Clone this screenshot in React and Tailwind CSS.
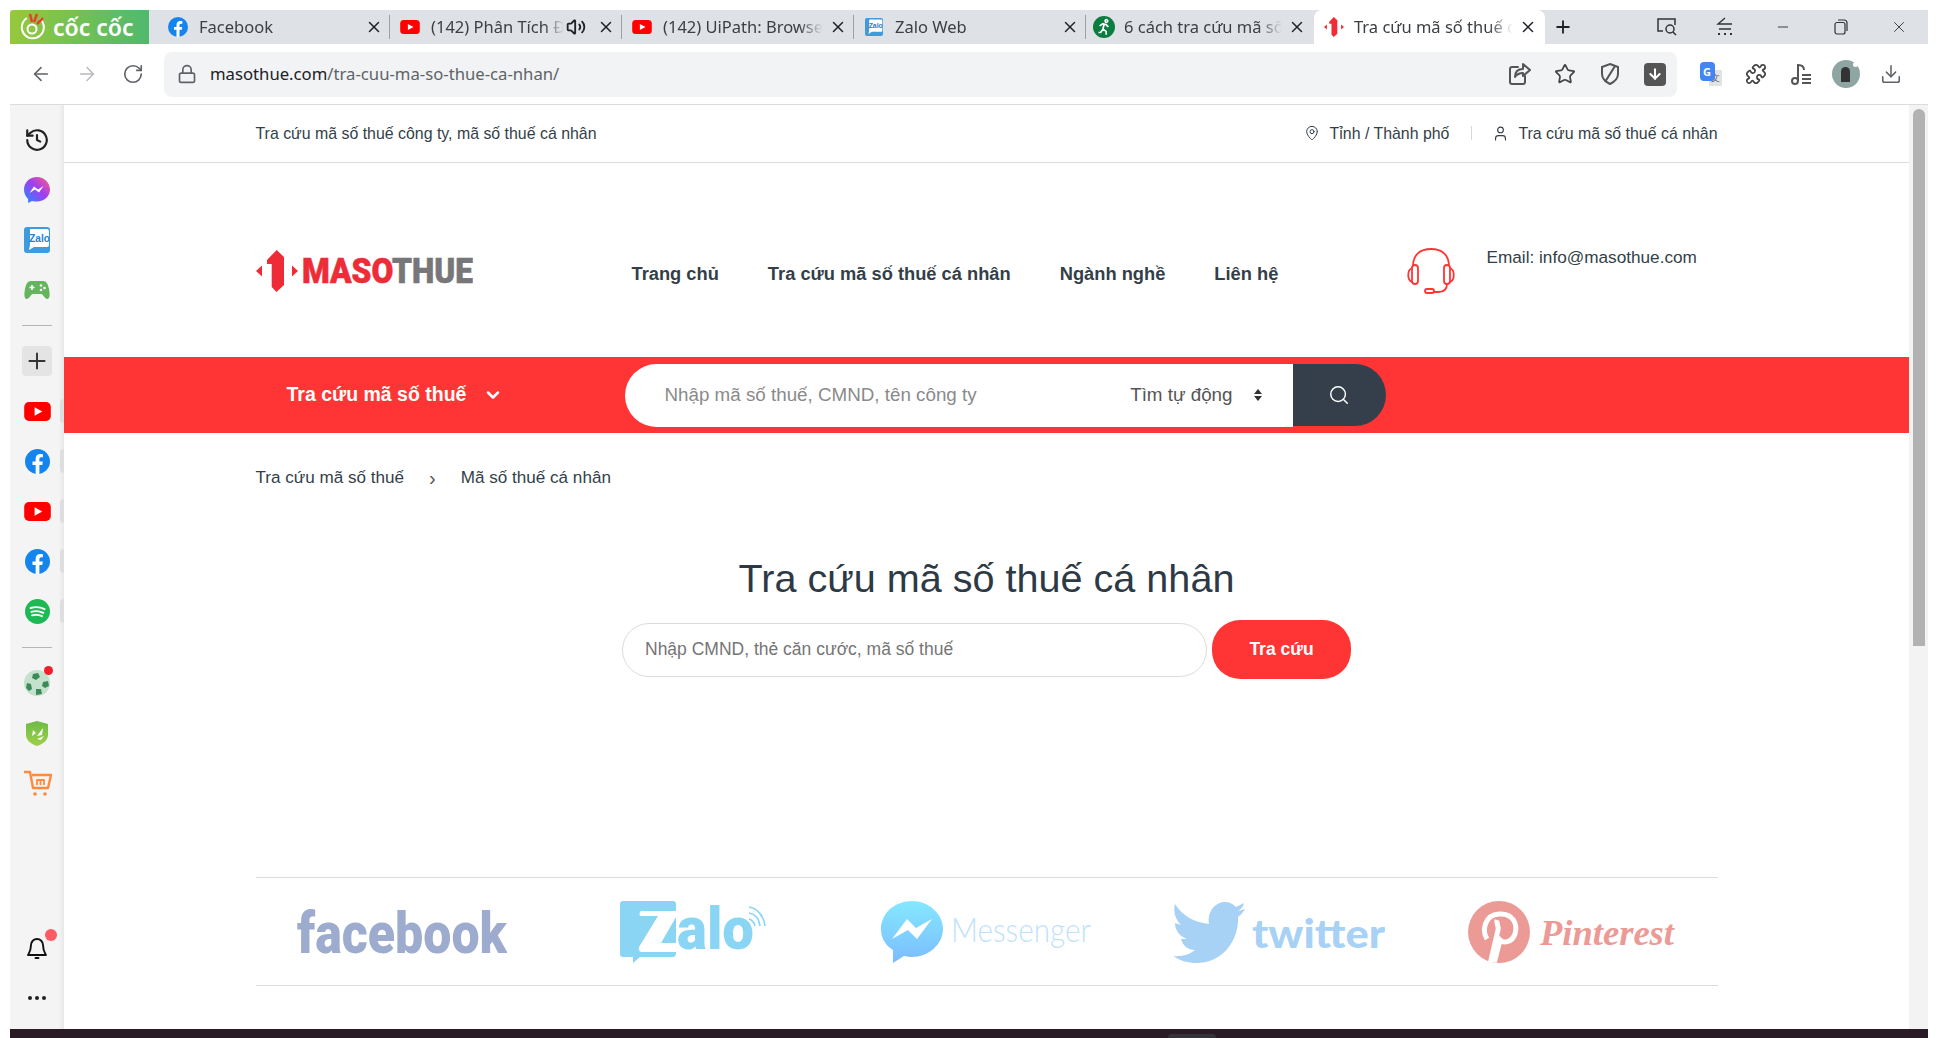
import React from 'react';
import { ArrowLeft, ArrowRight, RotateCw, Lock, Star, Puzzle, Download, X, Plus, Minus, Volume2, MapPin, User, Search, ChevronDown } from 'lucide-react';

function FbIcon({ size = 20 }) {
  return (
    <svg width={size} height={size} viewBox="0 0 24 24" className="shrink-0">
      <circle cx="12" cy="12" r="12" fill="#1485ee" />
      <path d="M16.6 15.4l.5-3.4h-3.3V9.8c0-.9.5-1.8 1.9-1.8h1.5V5.1s-1.3-.2-2.6-.2c-2.7 0-4.4 1.6-4.4 4.6V12H7.2v3.4h3V24h3.6v-8.6z" fill="#fff" />
    </svg>
  );
}

function YtIcon({ w = 20, h = 14 }) {
  return (
    <svg width={w} height={h} viewBox="0 0 28 20" className="shrink-0">
      <rect width="28" height="20" rx="5" fill="#f00" />
      <path d="M11 5.6L19 10l-8 4.4z" fill="#fff" />
    </svg>
  );
}

function ZaloIcon({ size = 26 }) {
  return (
    <svg width={size} height={size} viewBox="0 0 26 26" className="shrink-0">
      <rect width="26" height="26" rx="3" fill="#3d9be0" />
      <path d="M7 2h16c1 0 2 1 2 2v14c0 1-1 2-2 2H10l-5 3 1-5V3c0-.5.5-1 1-1z" fill="#fff" />
      <text x="15.500" y="14.500" textAnchor="middle" fontSize="10" fontWeight="700" fill="#2a80cc" fontFamily="Liberation Sans, sans-serif">Zalo</text>
    </svg>
  );
}

function MasoMark({ h = 20 }) {
  return (
    <svg height={h} viewBox="0 0 43 42" className="shrink-0">
      <path d="M0 21l6-5.500v11z" fill="#ee2c37" />
      <path d="M36 15.500l6 5.500-6 5.500z" fill="#ee2c37" />
      <path d="M20.700 0L28 7v28l-7.500 7-4.800-5V14H11v-4z" fill="#ee2c37" />
    </svg>
  );
}

function Tab({ icon, title, speaker, active, tight }) {
  const width = active ? 'w-[231px] bg-white rounded-t-lg' : tight ? 'w-[228px]' : 'w-[232px]';
  return (
    <div className={`relative flex items-center h-full shrink-0 ${tight ? 'pl-[8px]' : 'pl-[10px]'} ${width}`}>
      <div className="w-[20px] h-[20px] flex items-center justify-center shrink-0">{icon}</div>
      <div className={`${active || tight ? 'ml-[10px]' : 'ml-[11px]'} flex-1 min-w-0 overflow-hidden whitespace-nowrap text-[16.500px] text-[#3c4043] [mask-image:linear-gradient(90deg,#000_85%,transparent)]`}>{title}</div>
      {speaker && <Volume2 size={20} strokeWidth={2.2} className="ml-[2px] shrink-0 text-[#202124]" />}
      <X size={18} strokeWidth={2} className={`shrink-0 text-[#202124] ${speaker ? 'ml-[11px]' : 'ml-[6px]'} ${active || tight ? 'mr-[8px]' : 'mr-[6px]'}`} />
      {!active && !tight && <div className="w-px h-[24px] bg-[#9aa0a6] shrink-0" />}
    </div>
  );
}

function ToolBtn({ w = 'w-[45px]', children }) {
  return <div className={`${w} h-full flex items-center justify-center shrink-0 text-[#5f6368]`}>{children}</div>;
}

function SideItem({ marker, children }) {
  return (
    <div className="relative h-[50px] w-full flex items-center justify-center">
      {children}
      {marker && <div className="absolute right-0 top-[13px] w-[4px] h-[24px] rounded-l bg-[#dedede]" />}
    </div>
  );
}

function Sidebar() {
  return (
    <div className="w-[54px] shrink-0 flex flex-col pt-[10px] pb-[6px] bg-[linear-gradient(90deg,#f4f4f4_90%,#e8e8e8)]">
      <SideItem>
        <svg width="26" height="26" viewBox="0 0 24 24" fill="none" stroke="#222" strokeWidth="2" strokeLinecap="round" strokeLinejoin="round">
          <path d="M3 12a9 9 0 1 0 3-6.700L3 8" />
          <path d="M3 3v5h5" />
          <path d="M12 7.500V12l3 1.500" />
        </svg>
      </SideItem>
      <SideItem>
        <svg width="26" height="26" viewBox="0 0 26 26">
          <defs>
            <linearGradient id="msg" x1="0" y1="1" x2="1" y2="0">
              <stop offset="0" stopColor="#1f8cff" />
              <stop offset="0.55" stopColor="#a33df0" />
              <stop offset="1" stopColor="#ff5f7a" />
            </linearGradient>
          </defs>
          <path d="M13 0C5.700 0 0 5.400 0 12.600c0 3.800 1.600 7 4.100 9.300V26l3.900-2.100c1.600.5 3.200.7 5 .7 7.300 0 13-5.400 13-12S20.300 0 13 0z" fill="url(#msg)" />
          <path d="M5.500 16l4.500-6.500 4 3 5.500-3.500-4.500 6.500-4-3z" fill="#fff" />
        </svg>
      </SideItem>
      <SideItem><ZaloIcon size={26} /></SideItem>
      <SideItem>
        <svg width="26" height="20" viewBox="0 0 26 20">
          <path d="M7 1h12c3.500 0 5 3 6 8 .8 4.500 1.200 9-1.200 10-2 .7-4-3-6-5H8.200c-2 2-4 5.700-6 5C-.2 18 .2 13.500 1 9c1-5 2.500-8 6-8z" fill="#64b55e" />
          <path d="M5.500 7.500h5M8 5v5" stroke="#fff" strokeWidth="1.600" />
          <circle cx="17" cy="5.500" r="1.300" fill="#fff" />
          <circle cx="20.500" cy="8" r="1.300" fill="#fff" />
          <circle cx="17" cy="10" r="1.300" fill="#fff" />
        </svg>
      </SideItem>
      <div className="mt-[10px] mx-[12px] h-px bg-[#b5b5b5]" />
      <div className="mt-[10px] h-[50px] flex items-center justify-center">
        <div className="w-[30px] h-[30px] rounded bg-[#e4e4e4] flex items-center justify-center">
          <Plus size={26} strokeWidth={1.800} className="text-[#333]" />
        </div>
      </div>
      <SideItem marker><YtIcon w={27} h={19} /></SideItem>
      <SideItem marker><FbIcon size={25} /></SideItem>
      <SideItem marker><YtIcon w={27} h={19} /></SideItem>
      <SideItem marker><FbIcon size={25} /></SideItem>
      <SideItem marker>
        <svg width="25" height="25" viewBox="0 0 25 25">
          <circle cx="12.500" cy="12.500" r="12.500" fill="#1db954" />
          <path d="M5.500 9c4.500-1.300 10-1 14 1.200M6.300 12.800c4-1.100 8.500-.8 12 1.100M7 16.300c3.300-.9 7-.6 10 .9" fill="none" stroke="#fff" strokeWidth="1.900" strokeLinecap="round" />
        </svg>
      </SideItem>
      <div className="mt-[11px] mx-[12px] h-px bg-[#b5b5b5]" />
      <div className="h-[10px]" />
      <SideItem>
        <div className="relative">
          <svg width="26" height="26" viewBox="0 0 26 26">
            <circle cx="13" cy="13" r="13" fill="#c4e2cb" />
            <path d="M9 4l5-1 2 4-4 3-4-2zM19 12l5-1 1 5-4 2-3-2zM3 13l4 1 1 5-3 2-3-3zM12 19l5 0 1 5-6 1z" fill="#3c8a58" />
          </svg>
          <div className="absolute -top-[4px] -right-[3px] w-[9px] h-[9px] rounded-full bg-[#f01f2c]" />
        </div>
      </SideItem>
      <SideItem>
        <svg width="22" height="25" viewBox="0 0 22 25">
          <defs>
            <linearGradient id="shd" x1="0" y1="0" x2="0" y2="1">
              <stop offset="0" stopColor="#6dbb45" />
              <stop offset="1" stopColor="#9ed04a" />
            </linearGradient>
          </defs>
          <path d="M11 0l11 3v11c0 5-5 9-11 11C5 23 0 19 0 14V3z" fill="url(#shd)" />
          <path d="M6 15l1-6 3 3zM11 15l6-8-1 7zM11 18l7-3-3 4z" fill="#fff" />
        </svg>
      </SideItem>
      <SideItem>
        <svg width="29" height="27" viewBox="0 0 29 27" fill="none" stroke="#ff8a3d" strokeWidth="2.400" strokeLinejoin="round">
          <path d="M1 2h6l3 16h15l3-13H9" />
          <path d="M14 15v-5h3.500v5M17.500 10H21v5" strokeWidth="1.800" />
          <circle cx="12" cy="24" r="1.800" fill="#ff8a3d" stroke="none" />
          <circle cx="22" cy="24" r="1.800" fill="#ff8a3d" stroke="none" />
        </svg>
      </SideItem>
      <div className="relative mt-auto h-[50px] flex items-center justify-center">
        <svg width="24" height="24" viewBox="0 0 24 24" fill="none" stroke="#111" strokeWidth="1.900" strokeLinecap="round" strokeLinejoin="round">
          <path d="M6 9a6 6 0 0 1 12 0c0 6 2.500 9 3 10H3c.5-1 3-4 3-10z" />
          <path d="M10.500 22h3" />
        </svg>
        <div className="absolute top-[6px] right-[7px] w-[12px] h-[12px] rounded-full bg-[#ff5a63]" />
      </div>
      <div className="h-[50px] flex items-center justify-center gap-[3px]">
        <span className="w-[4px] h-[4px] rounded-full bg-[#222]" />
        <span className="w-[4px] h-[4px] rounded-full bg-[#222]" />
        <span className="w-[4px] h-[4px] rounded-full bg-[#222]" />
      </div>
    </div>
  );
}

function BrandRow() {
  return (
    <div className="grid grid-cols-5 items-center h-[109px] border-y border-[#dcdcdc]">
      <div className="flex justify-center">
        <svg width="210" height="50" viewBox="0 0 210 50">
          <text x="0" y="46" textLength="210" lengthAdjust="spacingAndGlyphs" fontSize="58" fontWeight="900" fill="#9dacce" fontFamily="Roboto, sans-serif">facebook</text>
        </svg>
      </div>
      <div className="flex justify-center">
        <svg width="148" height="64" viewBox="0 0 148 64">
          <path d="M3 1h50c2 0 3 1 3 3v7H22c-2 0-3 2-2 5h18L19 47c-1 3 1 5 3 5h34v1c0 2-1 4-3 4H20l-7 6v-6H3c-2 0-3-1-3-3V4c0-2 1-3 3-3z" fill="#8ad5f4" />
          <path d="M56 17v26H41z" fill="#8ad5f4" />
          <text x="57" y="49" textLength="77" lengthAdjust="spacingAndGlyphs" fontSize="60" fontWeight="900" fill="#8ad5f4" fontFamily="Roboto, sans-serif">alo</text>
          <path d="M129 19c3 1 5 3 6 7M129 13c6 1 10 6 11 13M129 7c8 1 15 9 16 19" fill="none" stroke="#8ad5f4" strokeWidth="1.600" />
        </svg>
      </div>
      <div className="flex justify-center">
        <svg width="210" height="64" viewBox="0 0 210 64">
          <defs>
            <linearGradient id="mbl" x1="0" y1="0" x2="0" y2="1">
              <stop offset="0" stopColor="#84e8ff" />
              <stop offset="1" stopColor="#7bbcff" />
            </linearGradient>
          </defs>
          <path d="M31 1C14 1 0 13 0 29c0 9 4 16 12 21v13l11-7c3 .5 5 1 8 1 17 0 31-13 31-28S48 1 31 1z" fill="url(#mbl)" />
          <path d="M11 39l15-20 9 9 16-9-15 20-9-9z" fill="#fff" />
          <text x="70" y="42" textLength="140" lengthAdjust="spacingAndGlyphs" fontSize="33" fontWeight="300" fill="#bfe2fb" fontFamily="Lato, sans-serif">Messenger</text>
        </svg>
      </div>
      <div className="flex justify-center">
        <svg width="212" height="64" viewBox="0 0 212 64">
          <path d="M2 4c8 12 18 18 34 20-2-12 6-22 16-22 5 0 8 2 11 5l8-4c-1 4-3 6-6 8l7-2c-2 3-4 6-7 8 1 22-14 46-42 46-8 0-15-2-23-7 8 1 16-1 22-6-7 0-12-4-14-11h6C6 36 2 30 2 23l6 2C2 19 0 11 2 4z" fill="#a7d1f5" />
          <text x="79" y="48" textLength="133" lengthAdjust="spacingAndGlyphs" fontSize="39" fontWeight="900" fill="#a7d1f5" fontFamily="Lato, sans-serif">twitter</text>
        </svg>
      </div>
      <div className="flex justify-center">
        <svg width="208" height="64" viewBox="0 0 208 64">
          <circle cx="32" cy="32" r="31" fill="#ec9a96" />
          <path d="M20 39c-5-8-3-24 12-25 14-1 19 10 16 20-3 8-11 10-15 6l-5 20h-4l7-30c1-4-2-7-1-10" fill="none" stroke="#fff" strokeWidth="5" />
          <text x="73" y="45" textLength="134" lengthAdjust="spacingAndGlyphs" fontSize="36" fontStyle="italic" fontWeight="700" fill="#ec9a96" fontFamily="Liberation Serif, serif">Pinterest</text>
        </svg>
      </div>
    </div>
  );
}

export default function App() {
  const nav = ['Trang chủ', 'Tra cứu mã số thuế cá nhân', 'Ngành nghề', 'Liên hệ'];

  return (
    <div className="w-[1938px] h-[1038px] overflow-hidden bg-white px-[10px] pt-[10px] flex flex-col font-['Liberation_Sans',sans-serif]">
      {/* tab strip */}
      <div className="h-[34px] shrink-0 flex items-center bg-[#dee1e6] font-['Noto_Sans',sans-serif]">
        <div className="w-[139px] h-full shrink-0 flex items-center gap-[8px] pl-[9px] rounded-tl bg-[linear-gradient(90deg,#96c83c,#4fb96e)]">
          <svg width="26" height="28" viewBox="0 0 26 28" fill="none" className="shrink-0">
            <path d="M8 5a11 11 0 1 0 13 1" stroke="#fff" strokeWidth="2" />
            <circle cx="13" cy="16" r="4.500" stroke="#fff" strokeWidth="2" />
            <path d="M11 1l2 8M18 1l-3 8M24 5l-6 6" stroke="#e8402f" strokeWidth="2.500" />
          </svg>
          <span className="text-white text-[23px] font-semibold leading-none whitespace-nowrap">cốc cốc</span>
        </div>
        <div className="w-[9px] shrink-0" />
        <Tab icon={<FbIcon size={20} />} title="Facebook" />
        <Tab icon={<YtIcon />} title="(142) Phân Tích Đầu Tư" speaker />
        <Tab icon={<YtIcon />} title="(142) UiPath: Browser Automation" />
        <Tab icon={<ZaloIcon size={18} />} title="Zalo Web" />
        <Tab
          tight
          icon={
            <svg width="22" height="22" viewBox="0 0 20 20" className="shrink-0">
              <circle cx="10" cy="10" r="10" fill="#0b7d3e" />
              <path d="M11 4.500a1.200 1.200 0 1 1 0 .1zM6 9l3-2 3 1 2 2M10 8l-1 4 3 2v3M9 12l-2 3H5" fill="none" stroke="#fff" strokeWidth="1.500" />
            </svg>
          }
          title="6 cách tra cứu mã số thuế cá nhân"
        />
        <Tab active icon={<MasoMark h={20} />} title="Tra cứu mã số thuế cá nhân" />
        <div className="w-[35px] flex justify-center shrink-0"><Plus size={20} strokeWidth={2.2} className="text-[#202124]" /></div>
        <div className="ml-auto flex h-full text-[#3c4043]">
          <div className="w-[58px] flex items-center justify-center">
            <svg width="20" height="18" viewBox="0 0 20 18" fill="none" stroke="#333" strokeWidth="1.500">
              <path d="M6 13H1V1h17v6" />
              <circle cx="13" cy="11" r="4" />
              <path d="M16 14l3 3" />
            </svg>
          </div>
          <div className="w-[58px] flex items-center justify-center">
            <svg width="20" height="20" viewBox="0 0 20 20" fill="none" stroke="#333" strokeWidth="1.400">
              <path d="M10 1L3 7l7 0M3 7h14M4 12h12" />
              <path d="M3 17h2M9 17h2M15 17h2" strokeWidth="2" />
            </svg>
          </div>
          <div className="w-[58px] flex items-center justify-center"><Minus size={16} strokeWidth={1.500} /></div>
          <div className="w-[58px] flex items-center justify-center">
            <svg width="14" height="16" viewBox="0 0 14 16" fill="none" stroke="#333" strokeWidth="1.200">
              <rect x="1" y="3.500" width="10" height="11.500" rx="2" />
              <path d="M4 1h6a3 3 0 0 1 3 3v8" />
            </svg>
          </div>
          <div className="w-[58px] flex items-center justify-center"><X size={18} strokeWidth={1.300} /></div>
        </div>
      </div>

      {/* toolbar */}
      <div className="h-[61px] shrink-0 flex items-center pl-[8px] border-b border-[#dcdcdc] font-['Noto_Sans',sans-serif]">
        <ToolBtn w="w-[46px]"><ArrowLeft size={22} strokeWidth={1.700} /></ToolBtn>
        <ToolBtn w="w-[46px]"><ArrowRight size={22} strokeWidth={1.500} className="text-[#b5b8bc]" /></ToolBtn>
        <ToolBtn w="w-[46px]"><RotateCw size={22} strokeWidth={1.800} /></ToolBtn>
        <div className="ml-[8px] w-[1513px] h-[45px] shrink-0 rounded-lg bg-[#f1f3f4] flex items-center pl-[13px]">
          <Lock size={20} strokeWidth={2} className="text-[#5f6368] shrink-0" />
          <div className="ml-[13px] text-[16.700px] whitespace-nowrap text-[#5f6368]"><span className="text-[#202124]">masothue.com</span>/tra-cuu-ma-so-thue-ca-nhan/</div>
          <div className="ml-auto flex h-full">
            <ToolBtn>
              <svg width="24" height="24" viewBox="0 0 24 24" fill="none" stroke="#555" strokeWidth="2" strokeLinejoin="round" strokeLinecap="round">
                <path d="M17 14v6a2 2 0 0 1-2 2H4a2 2 0 0 1-2-2V7a2 2 0 0 1 2-2h6" />
                <path d="M15 2l7 6-7 6v-3c-4 0-6 1-8 4 0-5 3-8 8-8z" />
              </svg>
            </ToolBtn>
            <ToolBtn><Star size={22} strokeWidth={1.900} className="text-[#444]" /></ToolBtn>
            <ToolBtn>
              <svg width="22" height="24" viewBox="0 0 22 24" fill="none" stroke="#555" strokeWidth="2">
                <path d="M11 2l8 3v7c0 5-4 8-8 10-4-2-8-5-8-10V5z" />
                <path d="M16 4L6 20" />
              </svg>
            </ToolBtn>
            <ToolBtn>
              <div className="w-[22px] h-[23px] rounded-sm bg-[#555] flex items-center justify-center">
                <ArrowRight size={16} strokeWidth={3} className="text-white rotate-90" />
              </div>
            </ToolBtn>
          </div>
        </div>
        <div className="ml-[11px] flex h-full">
          <ToolBtn>
            <div className="relative w-[22px] h-[24px]">
              <div className="absolute right-0 bottom-0 w-[13px] h-[16px] bg-[#e3e3e3] text-[9px] text-[#666] text-center leading-[16px]">文</div>
              <div className="absolute left-0 top-0 w-[15px] h-[19px] rounded-sm bg-[#4285f4] text-white text-[11px] font-bold text-center leading-[19px]">G</div>
            </div>
          </ToolBtn>
          <ToolBtn><Puzzle size={22} strokeWidth={1.900} className="text-[#444]" /></ToolBtn>
          <ToolBtn>
            <svg width="22" height="24" viewBox="0 0 22 24" fill="none" stroke="#555" strokeWidth="2">
              <circle cx="5" cy="19" r="3" />
              <path d="M8 19V3c3 0 6 1 6 5M12 13h9M12 17h9M12 21h9" />
            </svg>
          </ToolBtn>
          <ToolBtn>
            <div className="relative w-[28px] h-[28px] rounded-full bg-[#8ea5a2] flex items-center justify-center">
              <div className="w-[9px] h-[15px] rounded-t-full bg-[#333]" />
              <div className="absolute top-[2px] right-[2px] w-[5px] h-[5px] rounded-full bg-white" />
            </div>
          </ToolBtn>
          <ToolBtn><Download size={22} strokeWidth={1.700} /></ToolBtn>
        </div>
      </div>

      {/* browser body */}
      <div className="flex-1 min-h-0 flex">
        <Sidebar />
        <div className="flex-1 min-w-0 flex flex-col text-[#333f48]">
          <div className="h-[58px] shrink-0 border-b border-[#dcdcdc]">
            <div className="w-[1462px] h-full mx-auto flex items-center text-[15.900px]">
              <span>Tra cứu mã số thuế công ty, mã số thuế cá nhân</span>
              <div className="ml-auto flex items-center">
                <MapPin size={16} strokeWidth={1.500} />
                <span className="ml-[10px]">Tỉnh / Thành phố</span>
                <div className="w-px h-[14px] bg-[#d8d8d8] ml-[22px] mr-[20px]" />
                <User size={17} strokeWidth={1.600} />
                <span className="ml-[9px]">Tra cứu mã số thuế cá nhân</span>
              </div>
            </div>
          </div>

          <div className="h-[194px] shrink-0">
            <div className="w-[1462px] h-full mx-auto flex items-center">
              <div className="w-[376px] shrink-0 flex items-center mt-[22px]">
                <MasoMark h={42} />
                <svg width="171" height="30" viewBox="0 0 171 30" className="ml-[3px]">
                  <text x="0" y="27" textLength="171" lengthAdjust="spacingAndGlyphs" fontSize="35" fontWeight="900" fontFamily="Roboto, sans-serif">
                    <tspan fill="#ee2c37" stroke="#ee2c37" strokeWidth="0.600">MASO</tspan>
                    <tspan fill="#77777a" stroke="#77777a" strokeWidth="0.600">THUE</tspan>
                  </text>
                </svg>
              </div>
              <div className="flex items-center gap-[49px] w-[774px] shrink-0 font-bold text-[18.300px] whitespace-nowrap mt-[28px]">
                {nav.map(n => <span key={n}>{n}</span>)}
              </div>
              <svg width="50" height="46" viewBox="0 0 50 46" fill="none" stroke="#ff3535" strokeWidth="1.800" className="shrink-0 mt-[21px]">
                <path d="M7 18C7 7 14 1 25 1s18 6 18 17" />
                <rect x="6" y="17" width="6" height="19" rx="3" />
                <rect x="38" y="17" width="6" height="19" rx="3" />
                <path d="M6 20c-5 2-5 12 0 14M44 20c5 2 5 12 0 14" />
                <path d="M41 36c0 6-4 8-9 8h-5" />
                <rect x="19" y="41" width="9" height="4" rx="2" />
              </svg>
              <span className="ml-[31px] mt-[-4px] text-[17.200px] whitespace-nowrap">Email: info@masothue.com</span>
            </div>
          </div>

          <div className="h-[76px] shrink-0 bg-[#ff3535]">
            <div className="w-[1462px] h-full mx-auto flex items-center">
              <div className="w-[369px] shrink-0 pl-[31px] flex items-center gap-[17px] text-white font-bold text-[19.500px]">
                <span>Tra cứu mã số thuế</span>
                <ChevronDown size={20} strokeWidth={3} />
              </div>
              <div className="w-[668px] h-[63px] shrink-0 bg-white rounded-l-full flex items-center pl-[40px] text-[18.800px]">
                <span className="text-[#8a8a8a]">Nhập mã số thuế, CMND, tên công ty</span>
                <span className="ml-auto text-[#555]">Tìm tự động</span>
                <div className="ml-[21px] mr-[31px] flex flex-col gap-[2px]">
                  <div className="w-0 h-0 border-x-[4px] border-x-transparent border-b-[5px] border-b-[#333]" />
                  <div className="w-0 h-0 border-x-[4px] border-x-transparent border-t-[5px] border-t-[#333]" />
                </div>
              </div>
              <div className="w-[93px] h-[62px] shrink-0 bg-[#353f4b] rounded-r-full flex items-center justify-center">
                <Search size={22} strokeWidth={1.600} className="text-white" />
              </div>
            </div>
          </div>

          <div className="w-[1462px] mx-auto flex items-center h-[90px] shrink-0 text-[17.100px] whitespace-nowrap">
            <span>Tra cứu mã số thuế</span>
            <span className="mx-[25px] text-[#555] text-xl leading-none">›</span>
            <span>Mã số thuế cá nhân</span>
          </div>

          <h1 className="mt-[30px] text-center text-[39.600px] leading-[50px] font-normal text-[#2d3a46]">Tra cứu mã số thuế cá nhân</h1>

          <div className="mt-[17px] flex items-center justify-center gap-[5px]">
            <div className="w-[585px] h-[54px] rounded-full border border-[#dcdcdc] flex items-center pl-[22px] text-[17.500px] text-[#757575]">Nhập CMND, thẻ căn cước, mã số thuế</div>
            <div className="w-[139px] h-[59px] rounded-[28px] bg-[#ff3535] flex items-center justify-center text-white font-bold text-[17.500px]">Tra cứu</div>
          </div>

          <div className="w-[1462px] mx-auto mt-[198px]">
            <BrandRow />
          </div>
        </div>
        <div className="w-[19px] shrink-0 bg-[#f3f3f3] pl-[4px] pt-[4px]">
          <div className="w-[12px] h-[537px] rounded-t-full bg-[#b2b2b2]" />
        </div>
      </div>

      <div className="h-[9px] shrink-0 bg-[#2a1c26] flex">
        <div className="ml-[1158px] mt-[5px] w-[48px] h-[4px] rounded-t bg-[#333338]" />
      </div>
    </div>
  );
}
